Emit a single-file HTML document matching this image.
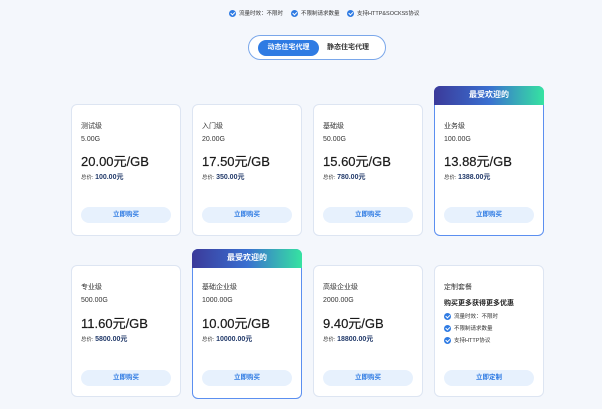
<!DOCTYPE html>
<html><head><meta charset="utf-8"><style>
*{margin:0;padding:0;box-sizing:border-box}
body{width:602px;height:409px;background:#f4f7fc;font-family:"Liberation Sans","Noto Sans CJK SC",sans-serif;position:relative;overflow:hidden;color:#333}
.feat{position:absolute;top:9px;font-size:5.5px;color:#333;display:flex;align-items:center;gap:3px}
.ck{width:7px;height:7px;border-radius:50%;background:#2f7be3;display:inline-flex;align-items:center;justify-content:center;flex:none}
.ck:after{content:"";width:3px;height:1.6px;border-left:1px solid #fff;border-bottom:1px solid #fff;transform:rotate(-45deg) translate(0,-0.5px)}
.tabs{position:absolute;left:248px;top:35px;width:138px;height:25px;border:1px solid #7aa7ea;border-radius:13px;background:#fff}
.tab1{position:absolute;left:9px;top:4px;width:61px;height:16px;border-radius:8px;background:#2f7be3;color:#fff;font-size:7px;text-align:center;line-height:16px;font-weight:bold}
.tab2{position:absolute;left:78px;top:4px;font-size:7px;line-height:16px;font-weight:bold;color:#333}
.card{position:absolute;width:110px;height:132px;background:#fff;border:1px solid #dde5f2;border-radius:6px}
.card.hot{border:1px solid #5b8ff0;height:150px}
.hdr{position:absolute;left:-1px;top:-1px;right:-1px;height:19px;border-radius:6px 6px 0 0;background:linear-gradient(90deg,#3b3a9a,#3a6fd0 50%,#36e3a1);color:#fff;font-size:8px;font-weight:bold;text-align:center;line-height:18px}
.in{position:absolute;left:9px;right:9px}
.t{font-size:7px;color:#333}
.s{font-size:7px;color:#333}
.p{font-size:13px;color:#1a1a1a;-webkit-text-stroke:0.2px #1a1a1a}
.tot{font-size:5.5px;color:#333}
.tot b{font-size:7px;color:#223a6a}
.btn{position:absolute;left:9px;right:9px;height:16px;border-radius:8px;background:#e7f1fd;color:#2f7be3;font-size:6.5px;text-align:center;line-height:16px;font-weight:bold}
</style></head><body>
<div class="feat" style="left:229px"><span class="ck"></span>流量时效：不限时</div>
<div class="feat" style="left:291px"><span class="ck"></span>不限制请求数量</div>
<div class="feat" style="left:347px"><span class="ck"></span>支持HTTP&amp;SOCKS5协议</div>
<div class="tabs"><div class="tab1">动态住宅代理</div><div class="tab2">静态住宅代理</div></div>

<div class="card" style="left:71px;top:104px">
<div class="in t" style="top:16px">测试级</div><div class="in s" style="top:31px">5.00G</div><div class="in p" style="top:46px">20.00元/GB</div><div class="in tot" style="top:67px">总价: <b>100.00元</b></div><div class="btn" style="top:102px">立即购买</div></div>
<div class="card" style="left:192px;top:104px">
<div class="in t" style="top:16px">入门级</div><div class="in s" style="top:31px">20.00G</div><div class="in p" style="top:46px">17.50元/GB</div><div class="in tot" style="top:67px">总价: <b>350.00元</b></div><div class="btn" style="top:102px">立即购买</div></div>
<div class="card" style="left:313px;top:104px">
<div class="in t" style="top:16px">基础级</div><div class="in s" style="top:31px">50.00G</div><div class="in p" style="top:46px">15.60元/GB</div><div class="in tot" style="top:67px">总价: <b>780.00元</b></div><div class="btn" style="top:102px">立即购买</div></div>
<div class="card hot" style="left:434px;top:86px"><div class="hdr">最受欢迎的</div>
<div class="in t" style="top:34px">业务级</div><div class="in s" style="top:49px">100.00G</div><div class="in p" style="top:64px">13.88元/GB</div><div class="in tot" style="top:85px">总价: <b>1388.00元</b></div><div class="btn" style="top:120px">立即购买</div></div>

<div class="card" style="left:71px;top:265px">
<div class="in t" style="top:16px">专业级</div><div class="in s" style="top:31px">500.00G</div><div class="in p" style="top:47px">11.60元/GB</div><div class="in tot" style="top:68px">总价: <b>5800.00元</b></div><div class="btn" style="top:104px">立即购买</div></div>
<div class="card hot" style="left:192px;top:249px"><div class="hdr">最受欢迎的</div>
<div class="in t" style="top:32px">基础企业级</div><div class="in s" style="top:47px">1000.00G</div><div class="in p" style="top:63px">10.00元/GB</div><div class="in tot" style="top:84px">总价: <b>10000.00元</b></div><div class="btn" style="top:120px">立即购买</div></div>
<div class="card" style="left:313px;top:265px">
<div class="in t" style="top:16px">高级企业级</div><div class="in s" style="top:31px">2000.00G</div><div class="in p" style="top:47px">9.40元/GB</div><div class="in tot" style="top:68px">总价: <b>18800.00元</b></div><div class="btn" style="top:104px">立即购买</div></div>
<div class="card" style="left:434px;top:265px">
<div class="in t" style="top:16px">定制套餐</div><div class="in" style="top:32px;font-size:7px;font-weight:bold;color:#222">购买更多获得更多优惠</div>
<div class="in feat" style="top:46px;position:absolute"><span class="ck"></span>流量时效：不限时</div>
<div class="in feat" style="top:58px;position:absolute"><span class="ck"></span>不限制请求数量</div>
<div class="in feat" style="top:70px;position:absolute"><span class="ck"></span>支持HTTP协议</div>
<div class="btn" style="top:104px">立即定制</div></div>
</body></html>
